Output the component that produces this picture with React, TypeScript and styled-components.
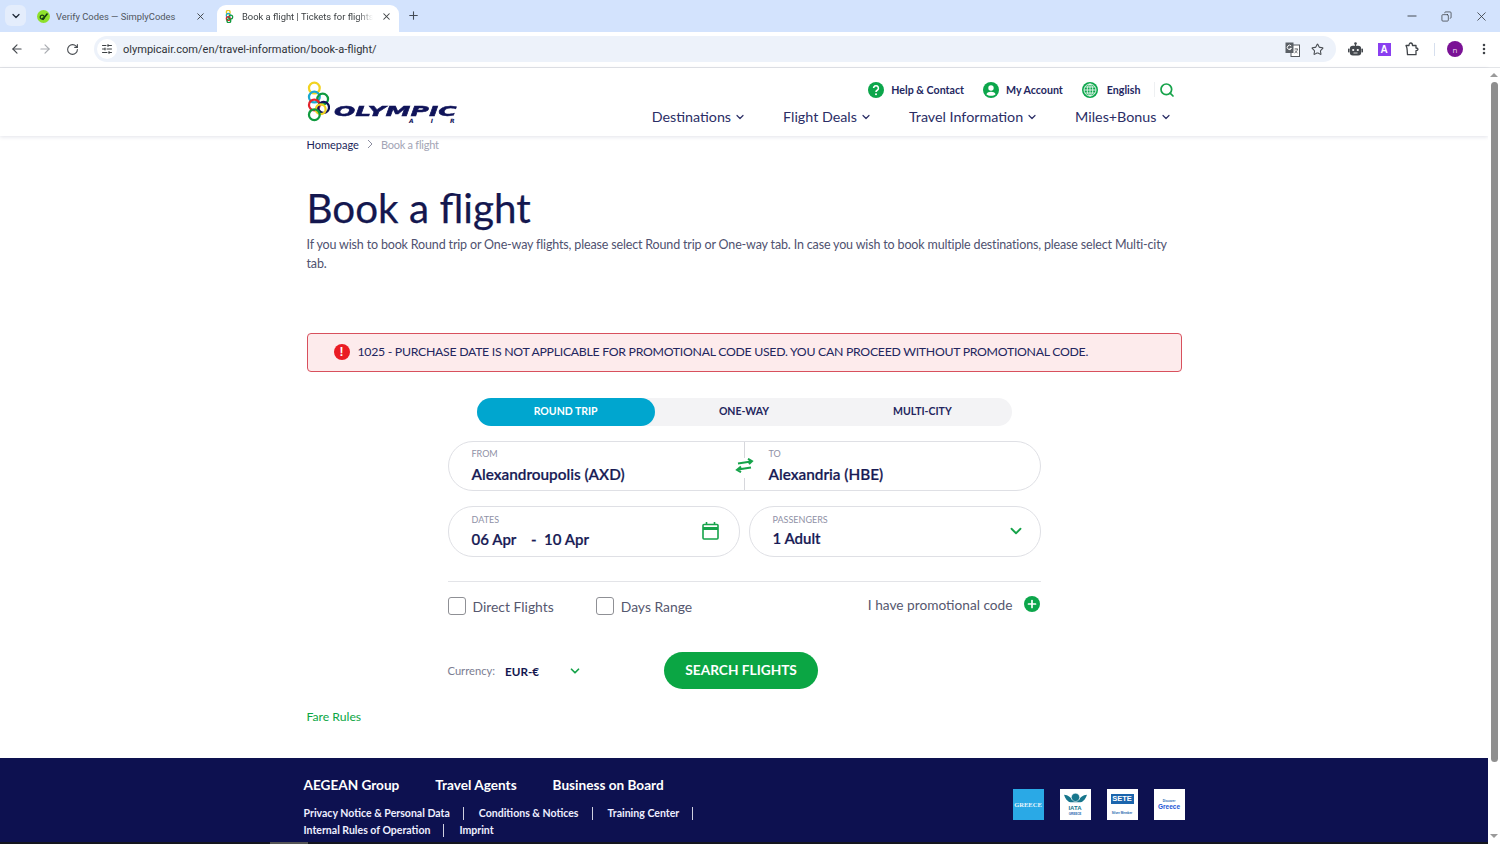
import React from "react";
import styled, { createGlobalStyle } from "styled-components";
import { ArrowLeft, ArrowRight, RotateCw, Star, ChevronDown, X, Plus, Minus, EllipsisVertical, SlidersHorizontal, Search, Copy } from "lucide-react";

const Global = createGlobalStyle`
  html, body { margin: 0; padding: 0; background: #fff; overflow: hidden; }
  * { box-sizing: border-box; }
  body { font-family: "Lato", "Liberation Sans", sans-serif; color: #14174f; }
`;

const Shell = styled.div`width: 1500px; height: 844px; display: flex; flex-direction: column; overflow: hidden; position: relative;`;

const TabStrip = styled.div`height: 32px; background: #d3e3fd; display: flex; align-items: flex-end; flex: none; font-family: "Roboto", "Liberation Sans", sans-serif;`;
const TabSearch = styled.div`width: 21px; height: 21px; margin: 0 2px 6px 5px; border-radius: 6px; background: #e4edfc; color: #1f2937; display: flex; align-items: center; justify-content: center;`;
const Tab = styled.div<{ $active?: boolean }>`
  width: ${p => (p.$active ? 182 : 187)}px; height: 27px; display: flex; align-items: center;
  padding: ${p => (p.$active ? "0 7px 5px 8px" : "0 9px 5px 9px")}; margin-right: ${p => (p.$active ? 0 : 2)}px;
  background: ${p => (p.$active ? "#fff" : "transparent")}; border-radius: 9px 9px 0 0;
  font-size: 9.4px; color: ${p => (p.$active ? "#3c4043" : "#50565e")}; gap: ${p => (p.$active ? 8 : 6)}px;
`;
const TabTitle = styled.div<{ $fade?: boolean }>`
  flex: 1; white-space: nowrap; overflow: hidden;
  ${p => p.$fade && "mask-image: linear-gradient(90deg, #000 88%, transparent);"}
`;
const TabClose = styled.div`color: #3c4043; display: flex;`;
const NewTab = styled.div`margin: 0 0 10px 8px; color: #444b55; display: flex;`;
const WindowControls = styled.div`margin-left: auto; display: flex; align-items: center; gap: 22px; padding: 0 11px 0 0; height: 32px; color: #34383c;`;

const Toolbar = styled.div`height: 36px; background: #fff; border-radius: 8px 8px 0 0; border-bottom: 1px solid #e3e5e8; display: flex; align-items: center; flex: none; padding-bottom: 1px; color: #474b50;`;
const NavIcons = styled.div`display: flex; align-items: center; gap: 14px; padding-left: 10px; width: 94px;`;
const Omnibox = styled.div`width: 1242px; height: 26px; background: #edf2fa; border-radius: 13px; display: flex; align-items: center; padding: 0 12px 0 3px; font-family: "Roboto", "Liberation Sans", sans-serif; font-size: 11.05px; color: #2f3338;`;
const SiteChip = styled.div`width: 20px; height: 20px; border-radius: 50%; background: #fff; display: flex; align-items: center; justify-content: center; margin-right: 6px; color: #3c4043;`;
const OmniRight = styled.div`margin-left: auto; display: flex; align-items: center; gap: 11px; color: #4a4e53;`;
const ExtIcons = styled.div`display: flex; align-items: center; padding-left: 12px; gap: 14.5px; flex: 1; color: #3f4348;`;
const ExtA = styled.div`width: 13px; height: 13px; background: #8a3ff0; color: #fff; font: 700 10px "Liberation Sans", sans-serif; display: flex; align-items: center; justify-content: center;`;
const ToolDivider = styled.div`width: 1px; height: 13px; background: #d6dfee; margin-right: -2px;`;
const Avatar = styled.div`width: 16px; height: 16px; border-radius: 50%; background: #7a1295; color: #e8d8ee; font: 8px "Open Sans", sans-serif; display: flex; align-items: center; justify-content: center; margin-right: -1px;`;

const Viewport = styled.div`flex: 1; display: flex; min-height: 0;`;
const Content = styled.div`width: 1488px; flex: none; display: flex; flex-direction: column;`;
const Scrollbar = styled.div`width: 12px; flex: none; display: flex; flex-direction: column; align-items: center; padding: 5px 0 6px; background: #fff;`;
const ScrollArrow = styled.div<{ $down?: boolean }>`width: 0; height: 0; border-left: 4px solid transparent; border-right: 4px solid transparent; ${p => (p.$down ? "border-top: 4px solid #9a9a9a; margin-top: auto;" : "border-bottom: 4px solid #9a9a9a;")}`;
const ScrollThumb = styled.div`width: 7px; height: 680px; margin: 5px 0 0; background: #8f8f8f; border-radius: 4px;`;

const Header = styled.header`height: 68px; flex: none; box-shadow: 0 1px 4px rgba(20, 23, 79, .12); background: #fff; display: flex; justify-content: center;`;
const Wrap = styled.div`width: 875px; margin: 0 auto;`;
const HeaderInner = styled(Wrap)`display: flex; justify-content: space-between;`;
const LogoBox = styled.div`display: flex; align-items: flex-start; padding-top: 13px; width: 165px;`;
const LogoWords = styled.div`margin: 22px 0 0 4px; display: flex; flex-direction: column;`;
const LogoName = styled.div`font: italic 700 19px/15px "DejaVu Sans", sans-serif; color: #10145a; transform: scaleX(1.32) scaleY(.78); transform-origin: left center; -webkit-text-stroke: .6px #10145a;`;
const LogoAir = styled.div`font: italic 700 6px/6px "DejaVu Sans", sans-serif; letter-spacing: 17px; color: #10145a; margin: 0 0 0 75px; white-space: nowrap;`;
const HeaderRight = styled.div`display: flex; flex-direction: column; align-items: flex-end;`;
const UtilRow = styled.div`height: 21px; margin-top: 11px; display: flex; align-items: center; padding-right: 7px;`;
const UtilItem = styled.a<{ $gap?: number }>`display: flex; align-items: center; gap: ${p => p.$gap ?? 7}px; font-size: 10.65px; font-weight: 700; color: #24275f; margin-left: 19px;`;
const SearchSlot = styled.div`display: flex; color: #16a34a; border-left: 1px solid #eef0f2; padding-left: 4px; margin-left: 13px; height: 15px; align-items: center;`;
const NavRow = styled.nav`display: flex; gap: 37px; margin-top: 8px; padding-right: 10px;`;
const NavItem = styled.a`display: flex; align-items: center; gap: 3px; font-size: 14.3px; line-height: 18px; color: #2b2e66; white-space: nowrap;`;

const Main = styled(Wrap)`flex: 1;`;
const Crumbs = styled.div`height: 16px; display: flex; align-items: center; gap: 5px; font-size: 11px; color: #1c1f5a;`;
const CrumbArrow = styled.svg`width: 12px; height: 10px; fill: none; stroke: #8c8ea0;`;
const CrumbLast = styled.span`color: #a3a5b5; letter-spacing: -.25px;`;
const Title = styled.h1`margin: 31px 0 0; font-size: 40.4px; line-height: 50px; font-weight: 400; color: #14174f; -webkit-text-stroke: .25px #14174f;`;
const Lead = styled.p`margin: 2px 0 0; font-size: 12.5px; letter-spacing: -.157px; line-height: 19px; color: #4f5270;`;
const AlertBox = styled.div`margin-top: 60px; height: 39px; border: 1px solid #d8505d; border-radius: 4px; background: #fdebec; display: flex; align-items: center; padding: 0 0 2px 26px; gap: 8px; font-size: 12.3px; letter-spacing: -.29px; color: #23265e; white-space: nowrap;`;
const AlertDot = styled.div`width: 16px; height: 16px; border-radius: 50%; background: #ea1c24; color: #fff; font: 700 12px "Liberation Sans", sans-serif; letter-spacing: 0; display: flex; align-items: center; justify-content: center;`;

const Tabs = styled.div`margin: 26px auto 0; width: 535px; height: 28px; background: #f3f3f5; border-radius: 14px; display: grid; grid-template-columns: repeat(3, 1fr);`;
const TripTab = styled.div<{ $on?: boolean }>`display: flex; align-items: center; justify-content: center; padding-bottom: 2px; border-radius: 14px; font-size: 10.5px; font-weight: 700; background: ${p => (p.$on ? "#00a6cf" : "transparent")}; color: ${p => (p.$on ? "#fff" : "#23265e")};`;

const Form = styled.div`width: 593px; margin: 15px 0 0 141px;`;
const RouteBox = styled.div`height: 50px; border: 1px solid #dfe0e5; border-radius: 25px; display: grid; grid-template-columns: 296px 1fr; position: relative;`;
const Field = styled.div<{ $pl?: number; $pt?: number }>`padding: ${p => p.$pt ?? 6}px 0 0 ${p => p.$pl ?? 23}px;`;
const FieldLabel = styled.div`font-size: 9px; line-height: 12px; color: #8f91a6;`;
const FieldValue = styled.div<{ $mt?: number; $size?: number }>`font-size: ${p => p.$size ?? 15.3}px; line-height: 20px; margin-top: ${p => p.$mt ?? 4}px; font-weight: 600; color: #181b55; -webkit-text-stroke: .2px #181b55; white-space: pre;`;
const RouteDivider = styled.div`position: absolute; left: 295px; top: 0; bottom: 0; width: 1px; background: linear-gradient(#d6d7dc 0 34%, #fff 34% 76%, #d6d7dc 76%);`;
const SwapIcon = styled.div`position: absolute; left: 286px; top: 16px; display: flex;`;
const DateRow = styled.div`display: grid; grid-template-columns: 292px 292px; gap: 9px; margin-top: 15px;`;
const PillField = styled.div`height: 51px; border: 1px solid #dfe0e5; border-radius: 25px; display: flex; align-items: flex-start; justify-content: space-between;`;
const PillIcon = styled.div<{ $pr: number; $pt: number }>`padding: ${p => p.$pt}px ${p => p.$pr}px 0 0; display: flex; color: #16a34a;`;
const Rule = styled.div`height: 1px; background: #e3e4e8; margin-top: 24px;`;
const OptionRow = styled.div`display: flex; align-items: flex-start; margin-top: 15px; height: 20px;`;
const CheckLabel = styled.label`display: flex; align-items: center; gap: 7px; font-size: 13.9px; color: #56586f; margin-right: 42px;`;
const CheckBoxMark = styled.span`width: 18px; height: 18px; border: 1.5px solid #8f9095; border-radius: 3px; display: block; background: #fff;`;
const PromoLink = styled.div`margin: -1px 1px 0 auto; display: flex; align-items: center; gap: 11px; font-size: 13.7px; color: #56586f; height: 16px;`;
const PlusDot = styled.div`width: 16px; height: 16px; border-radius: 50%; background: #0ca64b; color: #fff; display: flex; align-items: center; justify-content: center;`;
const ActionRow = styled.div`display: flex; align-items: center; margin-top: 35px; height: 37px;`;
const CurrencyLabel = styled.span`font-size: 11.2px; color: #7b7d92; margin-right: 10px;`;
const CurrencyValue = styled.span`font-size: 11.7px; font-weight: 700; color: #14174f; width: 63px;`;
const CurrencyChevron = styled.div`display: flex; color: #16a34a; width: 96px;`;
const SearchButton = styled.button`width: 154px; height: 37px; border: 0; border-radius: 19px; background: #0ba644; color: #fff; font: 700 13.7px "Lato", sans-serif; padding: 0 0 2px;`;
const FareLink = styled.a`display: block; margin-top: 19px; font-size: 12.2px; line-height: 18px; color: #0ba644;`;

const Footer = styled.footer`margin-top: 32px; flex: 1; background: #0d1150; color: #fff; display: flex; justify-content: center; position: relative; overflow: hidden;`;
const FooterInner = styled.div`width: 881px; display: flex; justify-content: space-between; padding-top: 18px;`;
const FooterHeads = styled.div`display: flex; gap: 36px; font-size: 13.6px; line-height: 18px; font-weight: 700;`;
const FooterLinks = styled.div`width: 420px; display: flex; flex-wrap: wrap; font-size: 10.55px; line-height: 17px; font-weight: 700; margin-top: 11px; color: #eef;`;
const FooterLink = styled.span<{ $bar?: boolean }>`white-space: nowrap; ${p => p.$bar && "border-right: 1px solid #cfd0e0; padding-right: 13px; margin-right: 15px; height: 13px; line-height: 13px; margin-top: 2px; margin-bottom: 2px;"}`;
const Badges = styled.div`display: flex; gap: 16px; padding-top: 13px;`;
const Badge = styled.div<{ $bg: string; $fg: string; $serif?: boolean; $size?: number }>`width: 31px; height: 31px; background: ${p => p.$bg}; color: ${p => p.$fg}; display: flex; flex-direction: column; align-items: center; justify-content: center; font-family: ${p => (p.$serif ? '"Liberation Serif", serif' : '"Liberation Sans", sans-serif')}; font-size: ${p => p.$size ?? 5}px; font-weight: 700; line-height: ${p => (p.$size ?? 5) + 1}px; text-align: center;`;
const SeteMark = styled.div`background: #1b65ad; color: #fff; width: 23px; font-size: 7.5px; line-height: 10px; margin-bottom: 7px;`;
const Tiny = styled.div`font-size: 3px; line-height: 4px; color: #1b65ad;`;
const BottomEdge = styled.div`position: absolute; left: 0; right: 0; bottom: 0; height: 2px; background: #14151e;`;
const EdgeThumb = styled.div`width: 38px; height: 2px; margin-left: 270px; background: #555;`;

const SolidHelp = () => (
  <svg width="16" height="16" viewBox="0 0 16 16"><circle cx="8" cy="8" r="8" fill="#0ca64b" /><path d="M5.6 6.1a2.4 2.4 0 1 1 3.6 2.1c-.8.5-1.2.9-1.2 1.7" fill="none" stroke="#fff" strokeWidth="1.6" /><circle cx="8" cy="12.2" r="1" fill="#fff" /></svg>
);
const SolidUser = () => (
  <svg width="16" height="16" viewBox="0 0 16 16"><circle cx="8" cy="8" r="8" fill="#0ca64b" /><circle cx="8" cy="6" r="2.7" fill="#fff" /><path d="M3.4 12.2c.8-1.8 2.6-2.5 4.6-2.5s3.8.7 4.6 2.5c-1.2 1-2.8 1.6-4.6 1.6s-3.4-.6-4.6-1.6z" fill="#fff" /></svg>
);
const Globe = () => (
  <svg width="16" height="16" viewBox="0 0 16 16"><circle cx="8" cy="8" r="8" fill="#0ca64b" /><g fill="none" stroke="#fff" strokeWidth=".8"><circle cx="8" cy="8" r="6" /><ellipse cx="8" cy="8" rx="2.8" ry="6" /><path d="M8 2v12M2 8h12M3 5h10M3 11h10" /></g></svg>
);
const Swap = () => (
  <svg width="19" height="15" viewBox="0 0 19 15" fill="none" stroke="#16a34a" strokeWidth="2"><path d="M3 5.4 16 3.4M13 .8l4 2.3-3 3" /><path d="M16 9.4 3 11.6M6 8.600l-4 3.200 4 2.400" /></svg>
);
const Calendar = () => (
  <svg width="17" height="18" viewBox="0 0 17 18" fill="none" stroke="#16a34a" strokeWidth="1.6"><rect x="1" y="2.5" width="15" height="14.5" rx="1" /><path d="M1 6.5h15" strokeWidth="3" /><path d="M4.500 0v3M12.500 0v3" /></svg>
);
const Rings = () => (
  <svg width="24" height="41" viewBox="0 0 24 41" fill="none" strokeWidth="2.3">
    <circle cx="7.5" cy="6.8" r="5.5" stroke="#f2d320" />
    <circle cx="7.5" cy="16" r="5.5" stroke="#1ba9cf" />
    <circle cx="16" cy="18" r="5.5" stroke="#0f9a3e" />
    <circle cx="7.5" cy="24" r="5.5" stroke="#e2232c" />
    <circle cx="17" cy="26.5" r="5.5" stroke="#10145a" />
    <circle cx="14" cy="28.5" r="5" stroke="#f2d320" />
    <circle cx="7.5" cy="34" r="5.5" stroke="#0f9a3e" />
  </svg>
);
const Favicon = () => (
  <svg width="9" height="13" viewBox="0 0 24 41" fill="none" strokeWidth="4"><circle cx="8" cy="7" r="6" stroke="#e6c820" /><circle cx="8" cy="17" r="6" stroke="#1ba9cf" /><circle cx="16" cy="22" r="6" stroke="#0f9a3e" /><circle cx="8" cy="27" r="6" stroke="#e2232c" /><circle cx="10" cy="34" r="6" stroke="#0f9a3e" /></svg>
);
const VerifyIcon = () => (
  <svg width="13" height="13" viewBox="0 0 13 13"><circle cx="6.5" cy="6.5" r="6.5" fill="#8ee02c" /><path d="M5 8l1 1 4.5-5.500" fill="none" stroke="#173d12" strokeWidth="1.6" /><circle cx="5.2" cy="7.2" r="2" fill="none" stroke="#173d12" strokeWidth="1.2" /></svg>
);
const IataMark = () => (
  <svg width="23" height="12" viewBox="0 0 21 11"><path d="M0 1.500C4 2 6 3.500 7 6h7c1-2.500 3-4 7-4.500-1 3-2.500 6-6 7H6C2.500 7.500 1 4.500 0 1.500z" fill="#17768c" /><circle cx="10.5" cy="4" r="3.8" fill="#17768c" stroke="#fff" strokeWidth=".5" /></svg>
);
const TranslateIcon = () => (
  <svg width="15" height="15" viewBox="0 0 15 15"><rect x="6" y="3" width="8.5" height="11.5" fill="#fff" stroke="#55595e" strokeWidth="1" /><rect x=".5" y=".5" width="8" height="10.5" fill="#5b6066" /><path d="M6.200 4a2.200 2.200 0 1 0 .3 2.400H4.600" fill="none" stroke="#fff" strokeWidth="1" /><path d="M9.500 7h3.500M11 6.400v.7M12.500 7c-.3 2-1.500 3.400-3 4M10 8.500c.5 1 1.500 2 2.500 2.500" fill="none" stroke="#55595e" strokeWidth=".8" /></svg>
);
const BotIcon = () => (
  <svg width="15" height="15" viewBox="0 0 15 15"><circle cx="7.5" cy="1.6" r="1.3" fill="#44484d" /><path d="M7 2h1v2H7z" fill="#44484d" /><rect x="1.8" y="3.8" width="11.4" height="9.6" rx="3" fill="#44484d" /><rect x="0" y="6.5" width="1.5" height="4" rx=".7" fill="#44484d" /><rect x="13.5" y="6.5" width="1.5" height="4" rx=".7" fill="#44484d" /><circle cx="5.2" cy="8" r="1.1" fill="#fff" /><circle cx="9.8" cy="8" r="1.1" fill="#fff" /><path d="M5.500 11h4" stroke="#fff" strokeWidth=".8" /></svg>
);
const ExtensionIcon = () => (
  <svg width="14" height="14" viewBox="0 0 14 14" fill="none" stroke="#3f4348" strokeWidth="1.3" strokeLinejoin="round"><path d="M1 3.500h3c0-1.300.6-2.500 1.800-2.500s1.700 1.200 1.700 2.500h3.500V6c1 0 2 .4 2 1.300s-1 1.400-2 1.400v4H2.500c0-1.500-.3-2.700-.3-4.200 0-1.700-.3-3.200-1.200-5z" /></svg>
);

export default function App() {
  return (
    <Shell>
      <Global />
      <TabStrip>
        <TabSearch><ChevronDown size={12} strokeWidth={2.5} /></TabSearch>
        <Tab>
          <VerifyIcon />
          <TabTitle>Verify Codes — SimplyCodes</TabTitle>
          <TabClose><X size={11} strokeWidth={2} /></TabClose>
        </Tab>
        <Tab $active>
          <Favicon />
          <TabTitle $fade>Book a flight | Tickets for flights</TabTitle>
          <TabClose><X size={11} strokeWidth={2.2} /></TabClose>
        </Tab>
        <NewTab><Plus size={13} strokeWidth={2} /></NewTab>
        <WindowControls>
          <Minus size={14} strokeWidth={1.5} />
          <Copy size={11} strokeWidth={1.6} style={{ transform: "scaleX(-1)" }} />
          <X size={15} strokeWidth={1.3} />
        </WindowControls>
      </TabStrip>
      <Toolbar>
        <NavIcons>
          <ArrowLeft size={14} strokeWidth={2} />
          <ArrowRight size={14} strokeWidth={2} color="#a9acb1" />
          <RotateCw size={13} strokeWidth={2} />
        </NavIcons>
        <Omnibox>
          <SiteChip><SlidersHorizontal size={12} strokeWidth={2} /></SiteChip>
          olympicair.com/en/travel-information/book-a-flight/
          <OmniRight>
            <TranslateIcon />
            <Star size={13} strokeWidth={2} />
          </OmniRight>
        </Omnibox>
        <ExtIcons>
          <BotIcon />
          <ExtA>A</ExtA>
          <ExtensionIcon />
          <ToolDivider />
          <Avatar>n</Avatar>
          <EllipsisVertical size={14} strokeWidth={2.4} />
        </ExtIcons>
      </Toolbar>
      <Viewport>
        <Content>
          <Header>
            <HeaderInner>
              <LogoBox>
                <Rings />
                <LogoWords>
                  <LogoName>OLYMPIC</LogoName>
                  <LogoAir>AIR</LogoAir>
                </LogoWords>
              </LogoBox>
              <HeaderRight>
                <UtilRow>
                  <UtilItem><SolidHelp />Help &amp; Contact</UtilItem>
                  <UtilItem><SolidUser />My Account</UtilItem>
                  <UtilItem $gap={9}><Globe />English</UtilItem>
                  <SearchSlot><Search size={16} strokeWidth={2.6} /></SearchSlot>
                </UtilRow>
                <NavRow>
                  <NavItem>Destinations <ChevronDown size={12} strokeWidth={2.4} /></NavItem>
                  <NavItem>Flight Deals <ChevronDown size={12} strokeWidth={2.4} /></NavItem>
                  <NavItem>Travel Information <ChevronDown size={12} strokeWidth={2.4} /></NavItem>
                  <NavItem>Miles+Bonus <ChevronDown size={12} strokeWidth={2.4} /></NavItem>
                </NavRow>
              </HeaderRight>
            </HeaderInner>
          </Header>
          <Main>
            <Crumbs>
              Homepage
              <CrumbArrow viewBox="0 0 12 10"><path d="M4 1l4 4-4 4" /></CrumbArrow>
              <CrumbLast>Book a flight</CrumbLast>
            </Crumbs>
            <Title>Book a flight</Title>
            <Lead>If you wish to book Round trip or One-way flights, please select Round trip or One-way tab. In case you wish to book multiple destinations, please select Multi-city tab.</Lead>
            <AlertBox>
              <AlertDot>!</AlertDot>
              1025 - PURCHASE DATE IS NOT APPLICABLE FOR PROMOTIONAL CODE USED. YOU CAN PROCEED WITHOUT PROMOTIONAL CODE.
            </AlertBox>
            <Tabs>
              <TripTab $on>ROUND TRIP</TripTab>
              <TripTab>ONE-WAY</TripTab>
              <TripTab>MULTI-CITY</TripTab>
            </Tabs>
            <Form>
              <RouteBox>
                <Field>
                  <FieldLabel>FROM</FieldLabel>
                  <FieldValue>Alexandroupolis (AXD)</FieldValue>
                </Field>
                <Field $pl={24}>
                  <FieldLabel>TO</FieldLabel>
                  <FieldValue>Alexandria (HBE)</FieldValue>
                </Field>
                <RouteDivider />
                <SwapIcon><Swap /></SwapIcon>
              </RouteBox>
              <DateRow>
                <PillField>
                  <Field $pt={7}>
                    <FieldLabel>DATES</FieldLabel>
                    <FieldValue $mt={3} $size={15}>06 Apr    -  10 Apr</FieldValue>
                  </Field>
                  <PillIcon $pr={20} $pt={15}><Calendar /></PillIcon>
                </PillField>
                <PillField>
                  <Field $pt={7} $pl={23}>
                    <FieldLabel>PASSENGERS</FieldLabel>
                    <FieldValue $mt={2} $size={15}>1 Adult</FieldValue>
                  </Field>
                  <PillIcon $pr={15} $pt={15}><ChevronDown size={18} strokeWidth={2.4} /></PillIcon>
                </PillField>
              </DateRow>
              <Rule />
              <OptionRow>
                <CheckLabel><CheckBoxMark />Direct Flights</CheckLabel>
                <CheckLabel><CheckBoxMark />Days Range</CheckLabel>
                <PromoLink>I have promotional code<PlusDot><Plus size={12} strokeWidth={3.4} /></PlusDot></PromoLink>
              </OptionRow>
              <ActionRow>
                <CurrencyLabel>Currency:</CurrencyLabel>
                <CurrencyValue>EUR-€</CurrencyValue>
                <CurrencyChevron><ChevronDown size={14} strokeWidth={3} /></CurrencyChevron>
                <SearchButton>SEARCH FLIGHTS</SearchButton>
              </ActionRow>
            </Form>
            <FareLink>Fare Rules</FareLink>
          </Main>
          <Footer>
            <FooterInner>
              <div>
                <FooterHeads>
                  <span>AEGEAN Group</span>
                  <span>Travel Agents</span>
                  <span>Business on Board</span>
                </FooterHeads>
                <FooterLinks>
                  <FooterLink $bar>Privacy Notice &amp; Personal Data</FooterLink>
                  <FooterLink $bar>Conditions &amp; Notices</FooterLink>
                  <FooterLink $bar>Training Center</FooterLink>
                  <FooterLink $bar>Internal Rules of Operation</FooterLink>
                  <FooterLink>Imprint</FooterLink>
                </FooterLinks>
              </div>
              <Badges>
                <Badge $bg="#2aa9e6" $fg="#e8f6fd" $serif $size={6.5}>GREECE</Badge>
                <Badge $bg="#fff" $fg="#17768c" $size={6}><IataMark />IATA<Tiny>GREECE</Tiny></Badge>
                <Badge $bg="#fff" $fg="#1b65ad"><SeteMark>SETE</SeteMark><Tiny>Silver Member</Tiny></Badge>
                <Badge $bg="#fff" $fg="#2456d6" $size={6.5}><Tiny>Discover</Tiny>Greece</Badge>
              </Badges>
            </FooterInner>
            <BottomEdge><EdgeThumb /></BottomEdge>
          </Footer>
        </Content>
        <Scrollbar>
          <ScrollArrow />
          <ScrollThumb />
          <ScrollArrow $down />
        </Scrollbar>
      </Viewport>
    </Shell>
  );
}
